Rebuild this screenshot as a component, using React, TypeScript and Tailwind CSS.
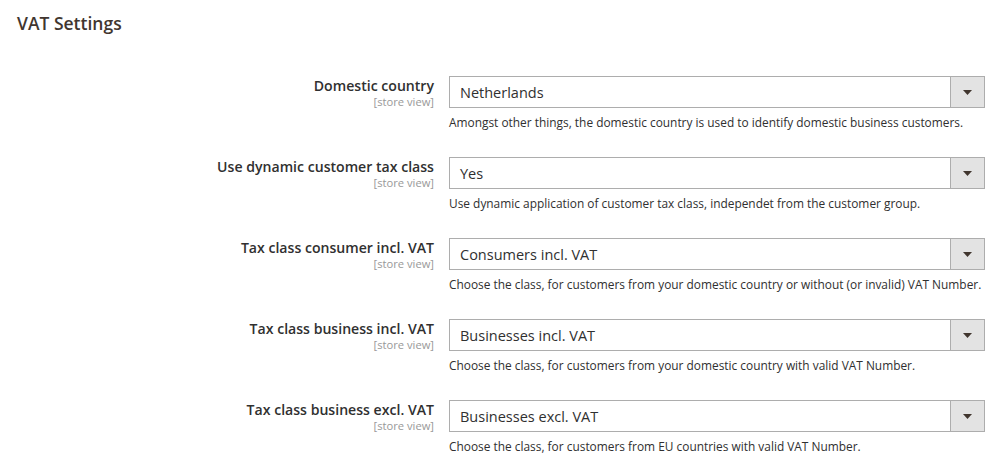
const rows = [
  {
    label: "Domestic country",
    value: "Netherlands",
    note: "Amongst other things, the domestic country is used to identify domestic business customers.",
  },
  {
    label: "Use dynamic customer tax class",
    value: "Yes",
    note: "Use dynamic application of customer tax class, independet from the customer group.",
  },
  {
    label: "Tax class consumer incl. VAT",
    value: "Consumers incl. VAT",
    note: "Choose the class, for customers from your domestic country or without (or invalid) VAT Number.",
  },
  {
    label: "Tax class business incl. VAT",
    value: "Businesses incl. VAT",
    note: "Choose the class, for customers from your domestic country with valid VAT Number.",
  },
  {
    label: "Tax class business excl. VAT",
    value: "Businesses excl. VAT",
    note: "Choose the class, for customers from EU countries with valid VAT Number.",
  },
];

export default function App() {
  return (
    <div className="w-[1003px] h-[474px] bg-white overflow-hidden font-['Open_Sans',sans-serif] text-[#303030]">
      {/* Section title */}
      <div className="pl-[17px] pt-[12px] h-[76px]">
        <h2 className="text-[17.5px] font-semibold text-[#41362f] leading-[22px]">VAT Settings</h2>
      </div>

      <div className="flex flex-col">
        {rows.map((row) => (
          <div key={row.label} className="flex h-[81px]">
            <div className="w-[434px] text-right pt-[1px]">
              <div className="text-[14.1px] font-semibold leading-[18px]">{row.label}</div>
              <div className="text-[11.2px] text-[#999] leading-[14px]">[store view]</div>
            </div>
            <div className="ml-[15px] w-[536px]">
              <div className="flex h-[32px] border border-[#adadad] bg-white">
                <div className="flex-1 flex items-center pl-[10px] pt-[1px] text-[14.5px] text-[#303030]">
                  {row.value}
                </div>
                <div className="w-[34px] flex items-center justify-center bg-[#e3e3e3] border-l border-[#adadad]">
                  <svg width="9" height="5" viewBox="0 0 9 5">
                    <path d="M0 0 L9 0 L4.5 5 Z" fill="#41362f" />
                  </svg>
                </div>
              </div>
              <p className="mt-[6px] text-[11.9px] leading-[16px] whitespace-nowrap text-[#303030]">{row.note}</p>
            </div>
          </div>
        ))}
      </div>
    </div>
  );
}
